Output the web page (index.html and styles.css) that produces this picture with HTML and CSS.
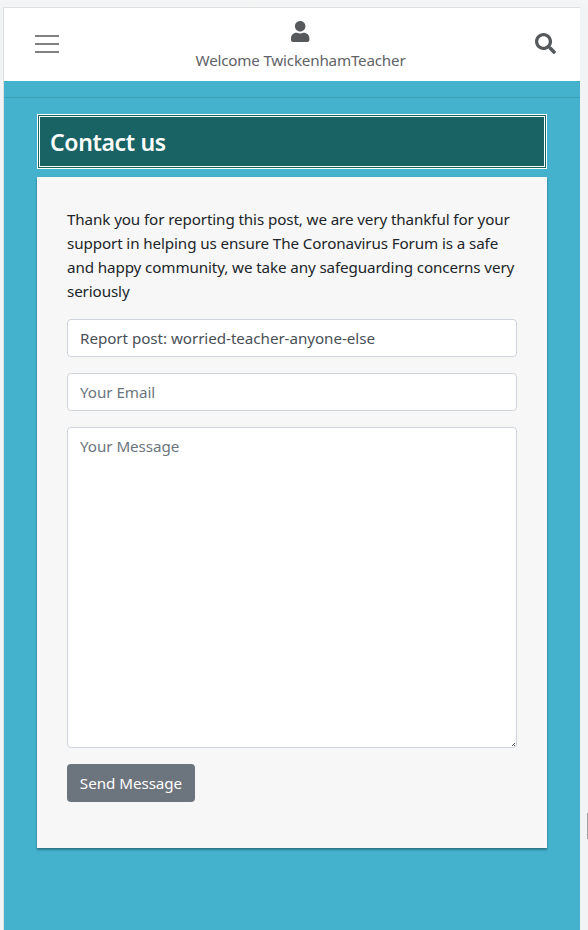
FILE: index.html
```html
<!DOCTYPE html>
<html lang="en">
<head>
<meta charset="utf-8">
<title>Contact us</title>
<link rel="stylesheet" href="styles.css">
</head>
<body>
<div class="device">
  <header class="topbar">
    <button class="icon-button" aria-label="Menu">
      <svg width="24" height="18" viewBox="0 0 24 18" shape-rendering="crispEdges"><path fill="#808080" d="M0 0h24v2H0zM0 8h24v2H0zM0 16h24v2H0z"/></svg>
    </button>
    <a class="account">
      <svg class="user-icon" width="18.400" height="21" viewBox="0 0 448 512"><path fill="currentColor" d="M224 256c70.700 0 128-57.300 128-128S294.700 0 224 0 96 57.300 96 128s57.300 128 128 128zm89.600 32h-16.700c-22.200 10.200-46.900 16-72.900 16s-50.600-5.800-72.900-16h-16.700C60.200 288 0 348.200 0 422.400V464c0 26.500 21.500 48 48 48h352c26.500 0 48-21.500 48-48v-41.600c0-74.200-60.200-134.400-134.400-134.400z"/></svg>
      <span class="welcome">Welcome TwickenhamTeacher</span>
    </a>
    <button class="icon-button search" aria-label="Search">
      <svg width="21" height="21" viewBox="0 0 512 512"><path fill="currentColor" d="M505 442.700L405.300 343c-4.500-4.500-10.600-7-17-7H372c27.600-35.300 44-79.700 44-128C416 93.100 322.900 0 208 0S0 93.100 0 208s93.100 208 208 208c48.300 0 92.700-16.400 128-44v16.300c0 6.400 2.500 12.500 7 17l99.700 99.700c9.400 9.400 24.600 9.400 33.900 0l28.300-28.300c9.400-9.400 9.400-24.600.1-34zM208 336c-70.700 0-128-57.200-128-128 0-70.700 57.200-128 128-128 70.700 0 128 57.200 128 128 0 70.700-57.200 128-128 128z"/></svg>
    </button>
  </header>
  <hr class="rule">
  <main class="content">
    <h1 class="title">Contact us</h1>
    <form class="card">
      <p class="intro">Thank you for reporting this post, we are very thankful for your<br>support in helping us ensure The Coronavirus Forum is a safe<br>and happy community, we take any safeguarding concerns very<br>seriously</p>
      <input class="field subject" type="text" value="Report post: worried-teacher-anyone-else" aria-label="Subject">
      <input class="field" type="email" placeholder="Your Email">
      <div class="message-wrap">
        <textarea class="field message" placeholder="Your Message"></textarea>
        <svg class="grip" width="3" height="3" viewBox="0 0 3 3" shape-rendering="crispEdges"><path fill="#555" d="M2 0h1v1H2zM1 1h1v1H1zM0 2h1v1H0zM2 2h1v1H2z"/></svg>
      </div>
      <button class="send" type="button">Send Message</button>
    </form>
  </main>
</div>
<div class="scroll-thumb"></div>
</body>
</html>
```
FILE: styles.css
```css
* { box-sizing: border-box; }
body {
  margin: 0;
  height: 930px;
  padding: 7px 8px 0 3px;
  overflow: hidden;
  background: linear-gradient(#f4f6f6, #f1f3f4 8px, #f1f3f5);
  font: 15.2px/24px "Noto Sans", "Open Sans", sans-serif;
  letter-spacing: -0.05px;
  color: #212529;
}
.device {
  height: 923px;
  border-top: 1px solid #dfe0e0;
  border-left: 1px solid #dfe0e0;
  background: #44b1cd;
}
.topbar {
  height: 73px;
  padding: 0 24px 0 31px;
  display: grid;
  grid-template-columns: 24px 1fr 21px;
  align-items: start;
  background: #fff;
  color: #55595c;
}
.icon-button {
  margin: 27px 0 0;
  padding: 0;
  border: 0;
  background: none;
  display: flex;
  color: inherit;
}
.search { margin-top: 25px; }
.account {
  display: flex;
  flex-direction: column;
  align-items: center;
  margin-top: 12.6px;
  padding-left: 7px;
}
.user-icon { display: block; margin-bottom: 6.4px; }
.welcome {
  white-space: nowrap;
  letter-spacing: -0.2px;
  color: #5f6366;
}
.rule {
  margin: 16px 0;
  border: 0;
  height: 1px;
  background: #3da0b9;
}
.content { padding: 0 33px; }
.title {
  margin: 0 0 8px;
  height: 55px;
  padding: 0 10px;
  border: 3px double #fff;
  background: #1a6365;
  color: #fff;
  font-size: 23px;
  font-weight: 600;
  line-height: 50px;
  letter-spacing: -0.35px;
}
.card {
  height: 671px;
  padding: 30px;
  background: #f7f7f7;
  box-shadow: 0 2px 2px rgba(0,0,0,.24), 0 1px 2px rgba(0,0,0,.2);
}
.intro {
  margin: 0 0 16px;
  white-space: nowrap;
  letter-spacing: -0.11px;
}
.field {
  display: block;
  width: 100%;
  height: 38px;
  margin: 0 0 16px;
  padding: 6px 12px;
  border: 1px solid #ced4da;
  border-radius: 4px;
  background: #fff;
  color: #495057;
  font: inherit;
  letter-spacing: inherit;
}
.field::placeholder { color: #6c757d; opacity: 1; }
.message-wrap { position: relative; }
.message { height: 321px; resize: none; }
.grip {
  position: absolute;
  right: 2px;
  bottom: 2px;
}
.send {
  display: block;
  width: 128px;
  height: 38px;
  padding: 0;
  border: 0;
  border-radius: 4px;
  background: #6c757d;
  color: #fff;
  font: inherit;
  letter-spacing: inherit;
}
.scroll-thumb {
  position: absolute;
  right: 0;
  top: 813px;
  width: 1px;
  height: 26px;
  background: #a0a0a0;
}
```
